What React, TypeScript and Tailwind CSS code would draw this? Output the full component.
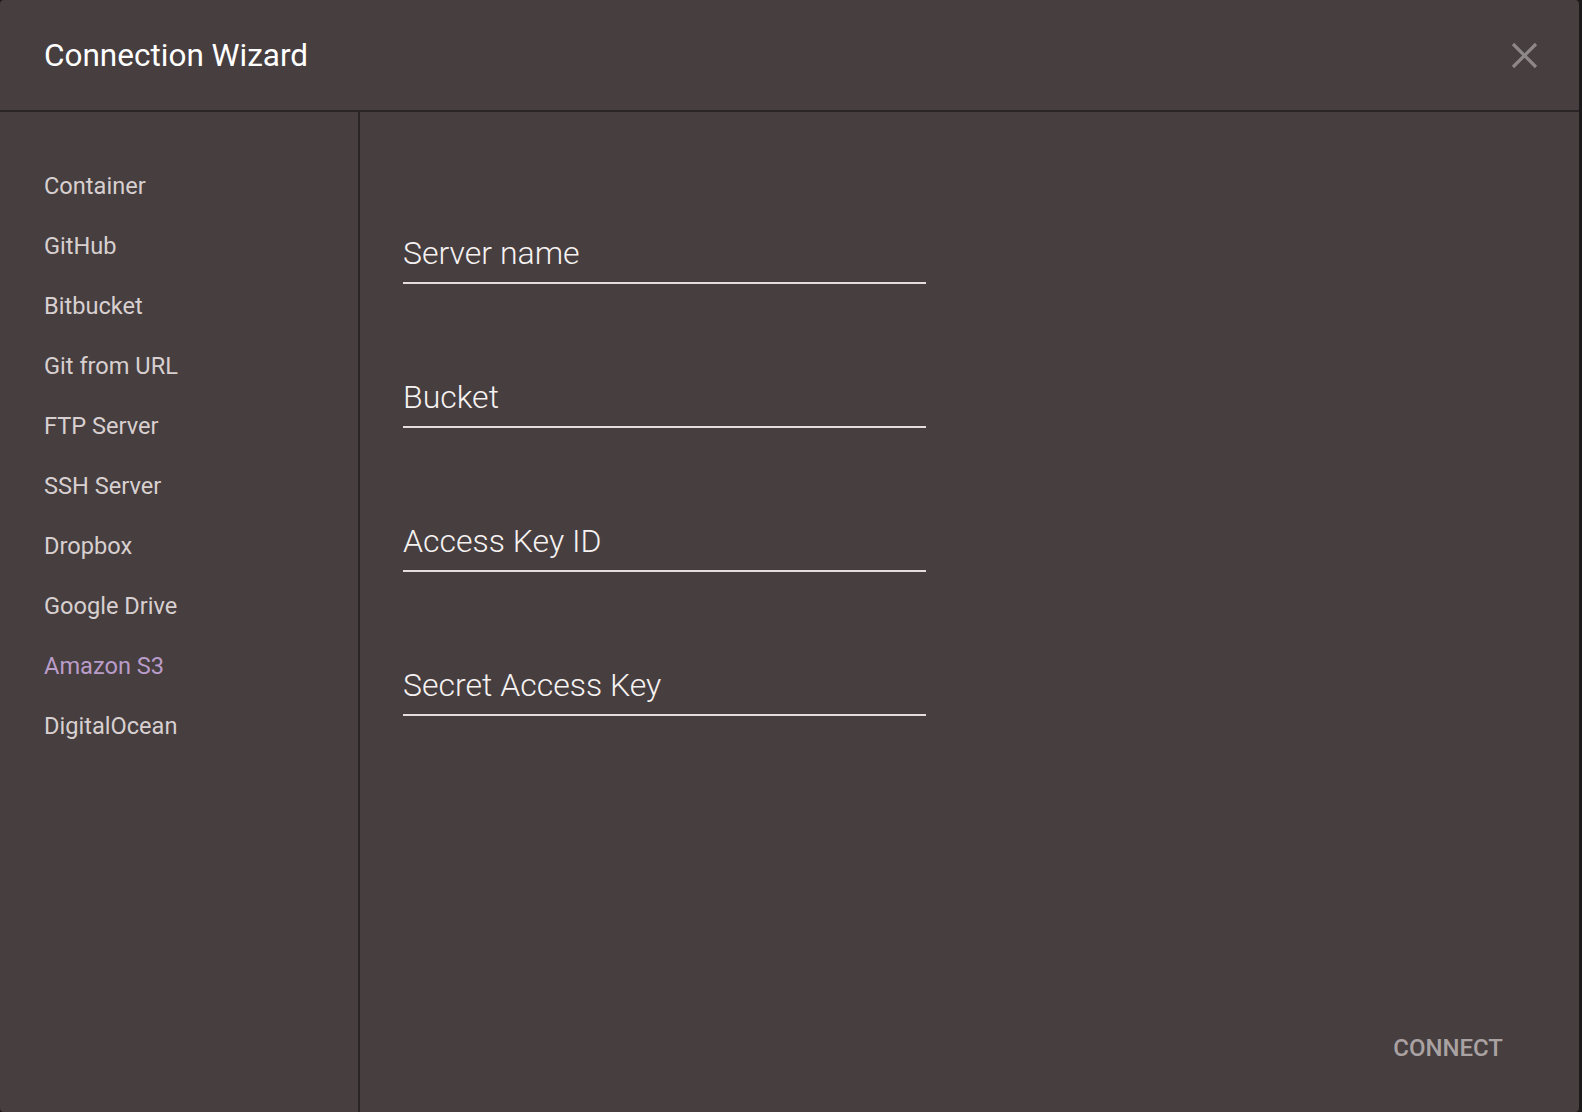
import React from "react";

const items = [
  "Container",
  "GitHub",
  "Bitbucket",
  "Git from URL",
  "FTP Server",
  "SSH Server",
  "Dropbox",
  "Google Drive",
  "Amazon S3",
  "DigitalOcean",
];

const fields = ["Server name", "Bucket", "Access Key ID", "Secret Access Key"];

export default function App() {
  return (
    <div
      className="w-full h-[1112px] bg-[#1b1919] overflow-hidden"
      style={{ fontFamily: "Roboto, 'Liberation Sans', sans-serif" }}
    >
      <div className="w-[1579px] h-[1112px] bg-[#463e3f] rounded-[4px] flex flex-col">
        <div className="h-[112px] shrink-0 border-b-2 border-[#2a2526] flex items-center justify-between pl-[44px] pr-[41px]">
          <div className="text-[31.5px] leading-[40px] text-white font-normal pt-[2px]">
            Connection Wizard
          </div>
          <svg width="27" height="27" viewBox="0 0 27 27" className="text-[#8d8787]">
            <path d="M2 2 L25 25 M25 2 L2 25" stroke="currentColor" strokeWidth="3.2" />
          </svg>
        </div>
        <div className="flex flex-1 min-h-0">
          <div className="w-[360px] shrink-0 border-r-2 border-[#2a2526] pt-[44px] pl-[44px]">
            {items.map((it) => (
              <div
                key={it}
                className={
                  "text-[23.6px] leading-[60px] " +
                  (it === "Amazon S3" ? "text-[#b99cc9]" : "text-[#d8d0d0]")
                }
              >
                {it}
              </div>
            ))}
          </div>
          <div className="flex-1 flex flex-col pl-[43px] pt-[121px] pr-[76px] pb-[44px]">
            <div className="flex flex-col gap-[93px]">
              {fields.map((f) => (
                <div
                  key={f}
                  className="w-[523px] border-b-2 border-[#e2dede] pb-[9px] text-[32px] leading-[40px] font-light text-[#f6f2f2]"
                >
                  {f}
                </div>
              ))}
            </div>
            <div className="flex-1" />
            <div className="flex justify-end">
              <div className="text-[24px] leading-[40px] font-medium text-[#aaa2a2]">
                CONNECT
              </div>
            </div>
          </div>
        </div>
      </div>
    </div>
  );
}
